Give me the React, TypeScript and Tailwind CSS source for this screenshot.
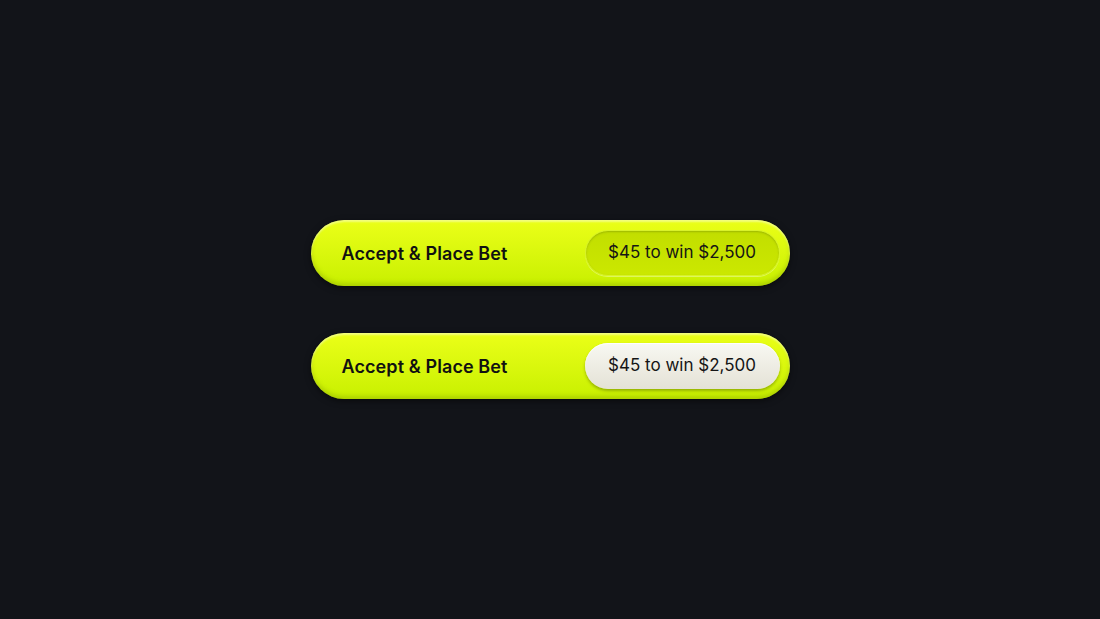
import React from 'react';

const font = { fontFamily: 'Inter, "Noto Sans", sans-serif' };

function BetButton({ variant }: { variant: 'tint' | 'light' }) {
  return (
    <button
      style={font}
      className="flex h-[66px] w-[479px] items-center justify-between rounded-full bg-gradient-to-b from-[#ebff17] to-[#c8f000] pl-[31px] pr-[10px] shadow-[inset_0_2px_2px_rgba(255,255,255,0.45),inset_0_-3px_4px_rgba(120,150,0,0.35),0_2px_6px_rgba(0,0,0,0.5)]"
    >
      <span className="text-[18px] font-semibold tracking-[0.1px] text-[#111]">Accept &amp; Place Bet</span>
      {variant === 'tint' ? (
        <span className="flex h-[46px] w-[195px] items-center justify-center rounded-full border border-[#d8f22a] bg-gradient-to-b from-[#c2de00] to-[#cbe800] text-[17px] text-[#151515] shadow-[inset_0_1px_2px_rgba(90,110,0,0.35),0_1px_0_rgba(255,255,255,0.35)]">
          $45 to win $2,500
        </span>
      ) : (
        <span className="flex h-[46px] w-[195px] items-center justify-center rounded-full bg-gradient-to-b from-[#f8f8f2] to-[#e4e2d6] text-[17px] text-[#151515] shadow-[inset_0_1px_1px_rgba(255,255,255,0.9),0_2px_3px_rgba(80,100,0,0.45)]">
          $45 to win $2,500
        </span>
      )}
    </button>
  );
}

export default function App() {
  return (
    <div className="flex h-[619px] w-full flex-col items-center justify-center gap-[47px] bg-[#121419]">
      <BetButton variant="tint" />
      <BetButton variant="light" />
    </div>
  );
}
